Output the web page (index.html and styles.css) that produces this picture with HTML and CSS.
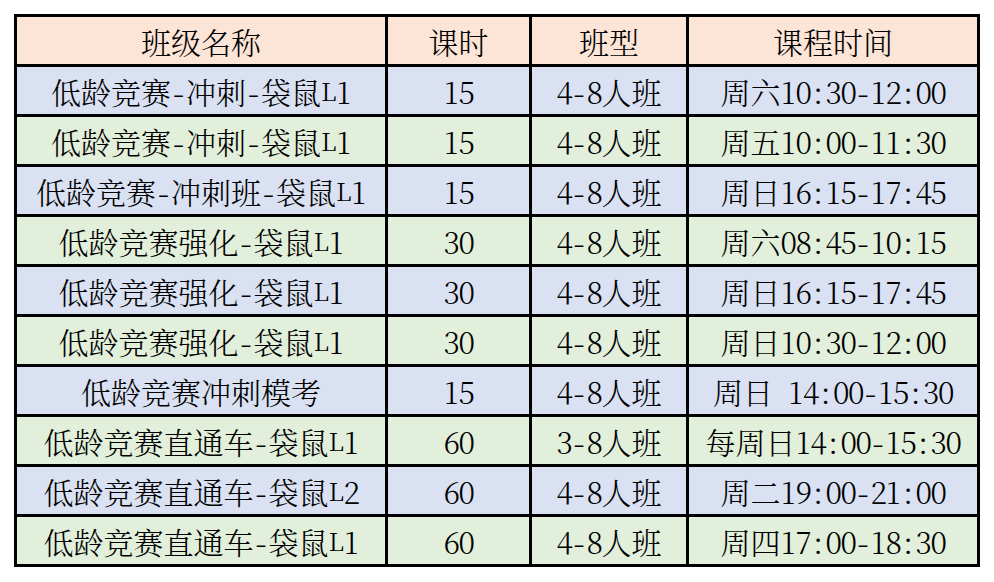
FILE: index.html
```html
<!DOCTYPE html>
<html lang="zh-CN">
<head>
<meta charset="utf-8">
<title>课程表</title>
<link rel="stylesheet" href="styles.css">
</head>
<body>
<div class="table">
  <div class="cell head">班级名称</div><div class="cell head">课时</div><div class="cell head">班型</div><div class="cell head">课程时间</div>

  <div class="cell blue">低龄竞赛<span class="h d">-</span>冲刺<span class="h d">-</span>袋鼠<span class="h n">L</span><span class="h">1</span></div>
  <div class="cell blue"><span class="h">1</span><span class="h">5</span></div>
  <div class="cell blue"><span class="h">4</span><span class="h d">-</span><span class="h">8</span>人班</div>
  <div class="cell blue">周六<span class="h">1</span><span class="h">0</span><span class="h">:</span><span class="h">3</span><span class="h">0</span><span class="h d">-</span><span class="h">1</span><span class="h">2</span><span class="h">:</span><span class="h">0</span><span class="h">0</span></div>

  <div class="cell green">低龄竞赛<span class="h d">-</span>冲刺<span class="h d">-</span>袋鼠<span class="h n">L</span><span class="h">1</span></div>
  <div class="cell green"><span class="h">1</span><span class="h">5</span></div>
  <div class="cell green"><span class="h">4</span><span class="h d">-</span><span class="h">8</span>人班</div>
  <div class="cell green">周五<span class="h">1</span><span class="h">0</span><span class="h">:</span><span class="h">0</span><span class="h">0</span><span class="h d">-</span><span class="h">1</span><span class="h">1</span><span class="h">:</span><span class="h">3</span><span class="h">0</span></div>

  <div class="cell blue">低龄竞赛<span class="h d">-</span>冲刺班<span class="h d">-</span>袋鼠<span class="h n">L</span><span class="h">1</span></div>
  <div class="cell blue"><span class="h">1</span><span class="h">5</span></div>
  <div class="cell blue"><span class="h">4</span><span class="h d">-</span><span class="h">8</span>人班</div>
  <div class="cell blue">周日<span class="h">1</span><span class="h">6</span><span class="h">:</span><span class="h">1</span><span class="h">5</span><span class="h d">-</span><span class="h">1</span><span class="h">7</span><span class="h">:</span><span class="h">4</span><span class="h">5</span></div>

  <div class="cell green">低龄竞赛强化<span class="h d">-</span>袋鼠<span class="h n">L</span><span class="h">1</span></div>
  <div class="cell green"><span class="h">3</span><span class="h">0</span></div>
  <div class="cell green"><span class="h">4</span><span class="h d">-</span><span class="h">8</span>人班</div>
  <div class="cell green">周六<span class="h">0</span><span class="h">8</span><span class="h">:</span><span class="h">4</span><span class="h">5</span><span class="h d">-</span><span class="h">1</span><span class="h">0</span><span class="h">:</span><span class="h">1</span><span class="h">5</span></div>

  <div class="cell blue">低龄竞赛强化<span class="h d">-</span>袋鼠<span class="h n">L</span><span class="h">1</span></div>
  <div class="cell blue"><span class="h">3</span><span class="h">0</span></div>
  <div class="cell blue"><span class="h">4</span><span class="h d">-</span><span class="h">8</span>人班</div>
  <div class="cell blue">周日<span class="h">1</span><span class="h">6</span><span class="h">:</span><span class="h">1</span><span class="h">5</span><span class="h d">-</span><span class="h">1</span><span class="h">7</span><span class="h">:</span><span class="h">4</span><span class="h">5</span></div>

  <div class="cell green">低龄竞赛强化<span class="h d">-</span>袋鼠<span class="h n">L</span><span class="h">1</span></div>
  <div class="cell green"><span class="h">3</span><span class="h">0</span></div>
  <div class="cell green"><span class="h">4</span><span class="h d">-</span><span class="h">8</span>人班</div>
  <div class="cell green">周日<span class="h">1</span><span class="h">0</span><span class="h">:</span><span class="h">3</span><span class="h">0</span><span class="h d">-</span><span class="h">1</span><span class="h">2</span><span class="h">:</span><span class="h">0</span><span class="h">0</span></div>

  <div class="cell blue">低龄竞赛冲刺模考</div>
  <div class="cell blue"><span class="h">1</span><span class="h">5</span></div>
  <div class="cell blue"><span class="h">4</span><span class="h d">-</span><span class="h">8</span>人班</div>
  <div class="cell blue">周日<span class="h"> </span><span class="h">1</span><span class="h">4</span><span class="h">:</span><span class="h">0</span><span class="h">0</span><span class="h d">-</span><span class="h">1</span><span class="h">5</span><span class="h">:</span><span class="h">3</span><span class="h">0</span></div>

  <div class="cell green">低龄竞赛直通车<span class="h d">-</span>袋鼠<span class="h n">L</span><span class="h">1</span></div>
  <div class="cell green"><span class="h">6</span><span class="h">0</span></div>
  <div class="cell green"><span class="h">3</span><span class="h d">-</span><span class="h">8</span>人班</div>
  <div class="cell green">每周日<span class="h">1</span><span class="h">4</span><span class="h">:</span><span class="h">0</span><span class="h">0</span><span class="h d">-</span><span class="h">1</span><span class="h">5</span><span class="h">:</span><span class="h">3</span><span class="h">0</span></div>

  <div class="cell blue">低龄竞赛直通车<span class="h d">-</span>袋鼠<span class="h n">L</span><span class="h">2</span></div>
  <div class="cell blue"><span class="h">6</span><span class="h">0</span></div>
  <div class="cell blue"><span class="h">4</span><span class="h d">-</span><span class="h">8</span>人班</div>
  <div class="cell blue">周二<span class="h">1</span><span class="h">9</span><span class="h">:</span><span class="h">0</span><span class="h">0</span><span class="h d">-</span><span class="h">2</span><span class="h">1</span><span class="h">:</span><span class="h">0</span><span class="h">0</span></div>

  <div class="cell green">低龄竞赛直通车<span class="h d">-</span>袋鼠<span class="h n">L</span><span class="h">1</span></div>
  <div class="cell green"><span class="h">6</span><span class="h">0</span></div>
  <div class="cell green"><span class="h">4</span><span class="h d">-</span><span class="h">8</span>人班</div>
  <div class="cell green">周四<span class="h">1</span><span class="h">7</span><span class="h">:</span><span class="h">0</span><span class="h">0</span><span class="h d">-</span><span class="h">1</span><span class="h">8</span><span class="h">:</span><span class="h">3</span><span class="h">0</span></div>
</div>
</body>
</html>
```
FILE: styles.css
```css
html, body {
  margin: 0;
  padding: 0;
  background: #ffffff;
}
body {
  padding: 14px 0 0 14px;
}
.table {
  display: grid;
  grid-template-columns: 368px 141px 154px 288px;
  grid-auto-rows: 47px;
  gap: 3px;
  padding: 3px;
  background: #000000;
  width: max-content;
}
.cell {
  display: flex;
  align-items: center;
  justify-content: center;
  font-family: "Noto Serif CJK SC", "Noto Sans CJK SC", serif;
  font-weight: 300;
  font-size: 30px;
  color: #000000;
  white-space: pre;
  line-height: 1;
}
.h {
  display: inline-block;
  width: 15px;
  text-align: center;
  white-space: pre;
}
.n {
  font-size: 25px;
}
.d {
  font-size: 34px;
}
.head { background: #fce4d6; }
.blue { background: #d9e1f2; }
.green { background: #e2efda; }
```
